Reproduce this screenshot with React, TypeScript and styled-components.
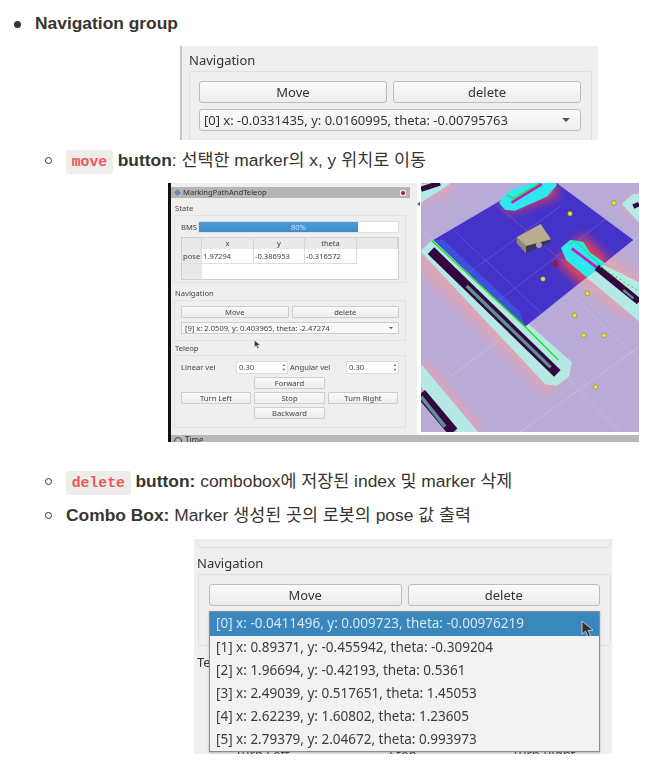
import React from "react"
import styled, { createGlobalStyle } from "styled-components"

const GlobalStyle = createGlobalStyle`
  html, body {
    margin: 0;
    background: #fff;
  }
  body {
    color: #37352f;
    font-family: "Liberation Sans", "Noto Sans CJK KR", sans-serif;
    font-size: 17.4px;
    line-height: 27px;
  }
`

const Page = styled.div`
  height: 769px;
  overflow: hidden;
  padding-top: 10px;
  box-sizing: border-box;
`

const OuterList = styled.ul`
  list-style: none;
  margin: 0;
  padding-left: 35px;
`

const InnerList = styled.ul`
  list-style: none;
  margin: 0;
  padding-left: 31px;
`

const OuterItem = styled.li`
  position: relative;
  &::before {
    background: #37352f;
    border-radius: 50%;
    content: "";
    height: 7px;
    left: -21px;
    position: absolute;
    top: 10.5px;
    width: 7px;
  }
`

const Item = styled.li<{ $gap?: number }>`
  margin-top: ${(p) => p.$gap ?? 0}px;
  position: relative;
  &::before {
    border: 1px solid #37352f;
    border-radius: 50%;
    box-sizing: border-box;
    content: "";
    height: 7px;
    left: -21.5px;
    position: absolute;
    top: 10px;
    width: 7px;
  }
`

const Code = styled.code`
  background: rgba(135, 131, 120, 0.15);
  border-radius: 3px;
  color: #eb5757;
  font-family: "Liberation Mono", monospace;
  font-size: 14.8px;
  font-weight: 700;
  line-height: 1;
  padding: 3.6px 5.7px;
`

const Figure = styled.div<{ $left: number; $top: number; $width: number; $height: number }>`
  box-sizing: border-box;
  height: ${(p) => p.$height}px;
  margin-left: ${(p) => p.$left}px;
  margin-top: ${(p) => p.$top}px;
  overflow: hidden;
  width: ${(p) => p.$width}px;
`

/* Qt widgets, big scale */
const QtPanel = styled.div<{ $edge?: boolean }>`
  background: #efefef;
  border-left: ${(p) => (p.$edge ? "2px solid #c8c8c8" : "0")};
  box-sizing: border-box;
  color: #333;
  filter: blur(0.3px);
  font-family: "Noto Sans", sans-serif;
  font-size: 13px;
  height: 100%;
  line-height: 16px;
  overflow: hidden;
  position: relative;
`

const GroupTitle = styled.div<{ $left: number; $top: number }>`
  margin-left: ${(p) => p.$left}px;
  padding-top: ${(p) => p.$top}px;
`

const GroupBox = styled.div<{ $left: number; $right: number; $top: number; $pad: string }>`
  border: 1px solid #e0e0e0;
  border-radius: 2px;
  margin: ${(p) => p.$top}px ${(p) => p.$right}px 0 ${(p) => p.$left}px;
  padding: ${(p) => p.$pad};
`

const ButtonRow = styled.div`
  display: grid;
  gap: 6px;
  grid-template-columns: 1fr 1fr;
`

const QtButton = styled.div`
  align-items: center;
  background: linear-gradient(#fbfbfb, #ececec);
  border: 1px solid #bdbdbd;
  border-radius: 3px;
  box-sizing: border-box;
  display: flex;
  height: 22px;
  justify-content: center;
`

const Combo = styled.div`
  align-items: center;
  background: linear-gradient(#fbfbfb, #f0f0f0);
  border: 1px solid #bdbdbd;
  border-radius: 3px;
  box-sizing: border-box;
  display: flex;
  height: 22px;
  justify-content: space-between;
  margin-top: 6px;
  padding: 0 10px 0 4px;
  white-space: nowrap;
`

const ComboArrow = styled.span<{ $size?: number }>`
  border-left: ${(p) => p.$size ?? 4}px solid transparent;
  border-right: ${(p) => p.$size ?? 4}px solid transparent;
  border-top: ${(p) => p.$size ?? 4}px solid #555;
  height: 0;
  width: 0;
`

const PopupList = styled.div`
  background: #f2f2f2;
  border: 1px solid #8c8c8c;
  box-shadow: 0 1px 2px rgba(0, 0, 0, 0.25);
  box-sizing: border-box;
  font-size: 13.5px;
  left: 15px;
  position: absolute;
  top: 72px;
  width: 391px;
  z-index: 2;
`

const PopupRow = styled.div<{ $active?: boolean }>`
  background: ${(p) => (p.$active ? "#3a87bd" : "transparent")};
  color: ${(p) => (p.$active ? "#d5e5f1" : "#3c3c3c")};
  height: ${(p) => (p.$active ? 24 : 23)}px;
  line-height: 23px;
  padding-left: 6px;
  white-space: nowrap;
`

const CursorIcon = styled.svg<{ $left: number; $top: number }>`
  left: ${(p) => p.$left}px;
  position: absolute;
  top: ${(p) => p.$top}px;
  z-index: 3;
`

const HiddenButtons = styled.div`
  color: #555;
  display: grid;
  gap: 4px;
  grid-template-columns: 1fr 1fr 1fr;
  margin-top: 76px;
  text-align: center;
`

/* Rviz window, small scale */
const RvizShot = styled.div`
  background: #fff;
  border-left: 3px solid #111;
  box-sizing: border-box;
  display: flex;
  flex-direction: column;
  height: 259px;
  overflow: hidden;
`

const RvizBody = styled.div`
  display: flex;
  height: 252px;
`

const SidePanel = styled.div`
  background: #efefef;
  box-sizing: border-box;
  color: #444;
  filter: blur(0.35px);
  flex: 1;
  font-family: "Noto Sans", sans-serif;
  font-size: 7.6px;
  line-height: 11px;
  padding-top: 4px;
  position: relative;
`

const DockTitle = styled.div`
  align-items: center;
  background: #b5b5b5;
  color: #333;
  display: flex;
  gap: 4px;
  height: 11px;
  justify-content: space-between;
  margin-right: 7px;
  padding: 0 4px;
`

const DockName = styled.span`
  align-items: center;
  display: flex;
  gap: 3px;
`

const DockIcon = styled.span`
  background: #6f86b5;
  display: block;
  height: 5px;
  transform: rotate(45deg);
  width: 5px;
`

const DockClose = styled.span`
  background: #e8e8e8;
  border-radius: 1px;
  display: block;
  height: 6px;
  position: relative;
  width: 6px;
  &::after {
    background: #c8102e;
    border-radius: 50%;
    content: "";
    height: 4px;
    left: 1px;
    position: absolute;
    top: 1px;
    width: 4px;
  }
`

const SmallTitle = styled.div<{ $top: number }>`
  margin-left: 4px;
  margin-top: ${(p) => p.$top}px;
`

const SmallGroup = styled.div<{ $height: number; $top: number }>`
  border: 1px solid #e3e3e3;
  box-sizing: border-box;
  height: ${(p) => p.$height}px;
  margin: ${(p) => p.$top}px 11px 0 3px;
  padding: 5px 6px;
`

const BmsRow = styled.div`
  align-items: center;
  display: flex;
  height: 12px;
  gap: 1px;
`

const BmsTrack = styled.div`
  background: #fff;
  border: 1px solid #ddd;
  box-sizing: border-box;
  flex: 1;
  height: 12px;
  position: relative;
`

const BmsFill = styled.div`
  background: linear-gradient(#4a9bd8, #3a8ccb);
  height: 100%;
`

const BmsLabel = styled.span`
  color: #cfe4f4;
  left: 0;
  position: absolute;
  right: 0;
  text-align: center;
  top: 0;
`

const PoseTable = styled.div`
  background: #fff;
  border: 1px solid #cfcfcf;
  box-sizing: border-box;
  display: grid;
  grid-template-columns: 20px 52px 51px 52px 1fr;
  grid-template-rows: 11px 15px 1fr;
  height: 43px;
  margin-top: 4px;
`

const HeadCell = styled.div`
  background: #e9e9e9;
  border-right: 1px solid #d6d6d6;
  text-align: center;
`

const PoseCell = styled.div<{ $head?: boolean }>`
  align-items: center;
  background: ${(p) => (p.$head ? "#e9e9e9" : "#fff")};
  border-bottom: 1px solid #ddd;
  border-right: 1px solid #ddd;
  display: flex;
  padding-left: 1px;
`

const RowHeadFill = styled.div`
  background: #e9e9e9;
`

const SmallButtons = styled.div`
  display: grid;
  gap: 3px;
  grid-template-columns: 1fr 1fr;
`

const SmallButton = styled.div<{ $col?: number }>`
  align-items: center;
  background: linear-gradient(#fafafa, #ededed);
  border: 1px solid #cdcdcd;
  border-radius: 1px;
  box-sizing: border-box;
  display: flex;
  grid-column: ${(p) => p.$col ?? "auto"};
  height: 12px;
  justify-content: center;
`

const SmallCombo = styled.div`
  align-items: center;
  background: #f8f8f8;
  border: 1px solid #cdcdcd;
  box-sizing: border-box;
  display: flex;
  height: 12px;
  justify-content: space-between;
  margin-top: 4px;
  padding: 0 5px 0 3px;
`

const VelRow = styled.div`
  align-items: center;
  display: grid;
  grid-template-columns: 55px 52px 58px 1fr;
  height: 13px;
`

const SpinBox = styled.div`
  background: #fff;
  border: 1px solid #ddd;
  box-sizing: border-box;
  color: #444;
  display: flex;
  height: 13px;
  justify-content: space-between;
  line-height: 11px;
  padding: 0 1px 0 2px;
`

const SpinArrows = styled.span`
  color: #666;
  font-size: 4px;
  line-height: 5px;
  text-align: center;
`

const DriveGrid = styled.div`
  display: grid;
  gap: 3px;
  grid-template-columns: 70px 71px 70px;
  margin-top: 3px;
`

const TimeBar = styled.div`
  align-items: flex-start;
  background: #b8b8b8;
  color: #333;
  display: flex;
  filter: blur(0.35px);
  font-family: "Noto Sans", sans-serif;
  font-size: 8px;
  gap: 3px;
  height: 7px;
  line-height: 10px;
  overflow: hidden;
  padding-left: 3px;
`

const TimeDot = styled.span`
  border: 1px solid #444;
  border-radius: 50%;
  display: block;
  height: 6px;
  margin-top: 2px;
  width: 6px;
`

const MapColumn = styled.div`
  background: #fff;
  flex: none;
  position: relative;
  width: 222px;
`

const SplitArrow = styled.span`
  border-bottom: 2px solid transparent;
  border-right: 3px solid #555;
  border-top: 2px solid transparent;
  height: 0;
  left: 0;
  position: absolute;
  top: 19px;
  width: 0;
`

const MapSvg = styled.svg`
  display: block;
  filter: blur(0.3px);
  margin-left: 4px;
`

const markers: [number, number][] = [
  [450, 101],
  [582, 69],
  [369, 297],
  [502, 340],
  [464, 406],
  [491, 466],
  [552, 466],
  [527, 621],
]

const MapView = () => (
  <MapSvg width={218} height={249} viewBox="3 9 654 747">
    <defs>
      <filter id="soft" x="-30%" y="-30%" width="160%" height="160%">
        <feGaussianBlur stdDeviation="12" />
      </filter>
      <filter id="hot" x="-50%" y="-50%" width="200%" height="200%">
        <feGaussianBlur stdDeviation="16" />
      </filter>
      <clipPath id="quad">
        <polygon points="40,180 240,62 285,40 410,9 640,180 315,440" />
      </clipPath>
    </defs>
    <rect x="3" y="9" width="654" height="747" fill="#b9abd8" />
    <g filter="url(#soft)" fill="none" stroke="#e8a4ad" opacity="0.72">
      <path d="M10 215L415 615" strokeWidth="100" />
      <path d="M3 565L165 760" strokeWidth="60" />
      <path d="M500 250L657 365" strokeWidth="130" />
      <path d="M3 30L90 9" strokeWidth="70" />
      <path d="M620 60L657 90" strokeWidth="60" />
    </g>
    <g stroke="#cfc6de" strokeWidth="2" fill="none" opacity="0.8">
      <path d="M90 590L657 170M300 756L657 500M3 150L600 756M360 250L657 540" />
    </g>
    <g fill="#b5e9e5" stroke="#b5e9e5" strokeWidth="10" strokeLinejoin="round">
      <polygon points="8,214 38,185 450,548 443,586 410,612 378,608" />
      <polygon points="3,560 3,612 118,756 168,756" />
      <polygon points="3,18 85,9 3,62" />
      <polygon points="505,290 540,255 657,312 657,418" />
      <polygon points="612,72 640,47 657,47 657,120" />
    </g>
    <g clipPath="url(#quad)">
      <rect x="3" y="9" width="654" height="747" fill="#4433c9" />
      <g filter="url(#hot)" fill="none" stroke="#f0404a">
        <path d="M450 205L530 280" strokeWidth="110" />
        <path d="M250 60L400 9" strokeWidth="80" />
      </g>
      <polygon points="40,180 70,180 300,395 315,440" fill="#3f52e0" opacity="0.9" />
      <g stroke="#7f75d8" strokeWidth="2" fill="none" opacity="0.7">
        <path d="M130 290L420 80M225 370L560 115M100 150L365 400M230 75L500 305" />
      </g>
    </g>
    <g fill="#2fe8ee" stroke="#2fe8ee" strokeWidth="10" strokeLinejoin="round">
      <path d="M243 68L272 35L340 14L405 14L378 46L285 87L258 85Z" />
      <path d="M429 205L452 185L487 190L507 222L548 250L500 286L443 238Z" />
    </g>
    <path d="M275 68L365 12" stroke="#c619b8" strokeWidth="8" fill="none" />
    <path d="M260 45L280 55L360 9" stroke="#2be02b" strokeWidth="4" fill="none" />
    <path d="M455 205L530 262" stroke="#c619b8" strokeWidth="8" fill="none" />
    <path d="M448 195L465 182L540 255" stroke="#2be02b" strokeWidth="3" fill="none" />
    <path d="M33 212L412 580" stroke="#33063f" strokeWidth="28" fill="none" />
    <path d="M140 318L392 562" stroke="#5f8f94" strokeWidth="10" fill="none" />
    <path d="M3 640L100 756" stroke="#33063f" strokeWidth="32" fill="none" />
    <path d="M3 650L75 740" stroke="#5f8f94" strokeWidth="11" fill="none" />
    <path d="M530 262L657 365" stroke="#33063f" strokeWidth="20" fill="none" />
    <path d="M610 330L640 355" stroke="#5f8f94" strokeWidth="7" fill="none" />
    <path d="M540 260L650 330" stroke="#2be02b" strokeWidth="3.5" strokeDasharray="5 9" fill="none" />
    <path d="M3 28L60 9" stroke="#33063f" strokeWidth="16" fill="none" />
    <path d="M640 80L657 72" stroke="#33063f" strokeWidth="14" fill="none" />
    <path d="M35 182L315 440L415 540" stroke="#27e027" strokeWidth="4.5" fill="none" />
    <polygon points="290,172 318,198 318,220 290,190" fill="#8f8770" />
    <polygon points="318,198 393,178 393,185 318,220" fill="#3b3560" />
    <polygon points="290,172 362,132 393,178 318,198" fill="#b8ad8f" />
    <circle cx="357" cy="195" r="9" fill="#aaa79c" />
    <circle cx="407" cy="251" r="7" fill="#c8101c" stroke="#7a1020" strokeWidth="1.5" />
    {markers.map(([cx, cy]) => (
      <circle key={cx + cy} cx={cx} cy={cy} r="7" fill="#f2e21e" stroke="#77702a" strokeWidth="1.5" />
    ))}
  </MapSvg>
)

const Cursor = ({ left, top, width }: { left: number; top: number; width: number }) => (
  <CursorIcon $left={left} $top={top} width={width} height={width * 1.3} viewBox="0 0 14 18">
    <path d="M1 1L1 14L4.5 11L7 16.5L9.5 15.5L7 10.5L12 10Z" fill="#333" stroke="#ddd" strokeWidth="0.8" />
  </CursorIcon>
)

const poseRows = [
  "[1] x: 0.89371, y: -0.455942, theta: -0.309204",
  "[2] x: 1.96694, y: -0.42193, theta: 0.5361",
  "[3] x: 2.49039, y: 0.517651, theta: 1.45053",
  "[4] x: 2.62239, y: 1.60802, theta: 1.23605",
  "[5] x: 2.79379, y: 2.04672, theta: 0.993973",
]

const App = () => (
  <Page>
    <GlobalStyle />
    <OuterList>
      <OuterItem>
        <strong>Navigation group</strong>
        <Figure $left={145} $top={9} $width={418} $height={94}>
          <QtPanel $edge>
            <GroupTitle $left={7} $top={6}>Navigation</GroupTitle>
            <GroupBox $left={7} $right={6} $top={3} $pad="9px 10px 9px 9px">
              <ButtonRow>
                <QtButton>Move</QtButton>
                <QtButton>delete</QtButton>
              </ButtonRow>
              <Combo>
                [0] x: -0.0331435, y: 0.0160995, theta: -0.00795763
                <ComboArrow />
              </Combo>
            </GroupBox>
          </QtPanel>
        </Figure>
        <InnerList>
          <Item $gap={7}>
            <Code>move</Code> <strong>button</strong>: 선택한 marker의 x, y 위치로 이동
            <Figure $left={102} $top={9} $width={471} $height={259}>
              <RvizShot>
                <RvizBody>
                  <SidePanel>
                    <DockTitle>
                      <DockName>
                        <DockIcon />
                        MarkingPathAndTeleop
                      </DockName>
                      <DockClose />
                    </DockTitle>
                    <SmallTitle $top={5}>State</SmallTitle>
                    <SmallGroup $height={68} $top={1}>
                      <BmsRow>
                        BMS
                        <BmsTrack>
                          <BmsFill style={{ width: "80%" }} />
                          <BmsLabel>80%</BmsLabel>
                        </BmsTrack>
                      </BmsRow>
                      <PoseTable>
                        <HeadCell />
                        <HeadCell>x</HeadCell>
                        <HeadCell>y</HeadCell>
                        <HeadCell>theta</HeadCell>
                        <HeadCell />
                        <PoseCell $head>pose</PoseCell>
                        <PoseCell>1.97294</PoseCell>
                        <PoseCell>-0.386953</PoseCell>
                        <PoseCell>-0.316572</PoseCell>
                        <span />
                        <RowHeadFill />
                      </PoseTable>
                    </SmallGroup>
                    <SmallTitle $top={5}>Navigation</SmallTitle>
                    <SmallGroup $height={41} $top={1}>
                      <SmallButtons>
                        <SmallButton>Move</SmallButton>
                        <SmallButton>delete</SmallButton>
                      </SmallButtons>
                      <SmallCombo>
                        [9] x: 2.0509, y: 0.403965, theta: -2.47274
                        <ComboArrow $size={2} />
                      </SmallCombo>
                    </SmallGroup>
                    <SmallTitle $top={2}>Teleop</SmallTitle>
                    <SmallGroup $height={73} $top={1}>
                      <VelRow>
                        Linear vel
                        <SpinBox>
                          0.30
                          <SpinArrows>▲<br />▼</SpinArrows>
                        </SpinBox>
                        <span>&nbsp;Angular vel</span>
                        <SpinBox>
                          0.30
                          <SpinArrows>▲<br />▼</SpinArrows>
                        </SpinBox>
                      </VelRow>
                      <DriveGrid>
                        <SmallButton $col={2}>Forward</SmallButton>
                        <SmallButton $col={1}>Turn Left</SmallButton>
                        <SmallButton>Stop</SmallButton>
                        <SmallButton>Turn Right</SmallButton>
                        <SmallButton $col={2}>Backward</SmallButton>
                      </DriveGrid>
                    </SmallGroup>
                    <Cursor left={83} top={157} width={7} />
                  </SidePanel>
                  <MapColumn>
                    <SplitArrow />
                    <MapView />
                  </MapColumn>
                </RvizBody>
                <TimeBar>
                  <TimeDot />
                  Time
                </TimeBar>
              </RvizShot>
            </Figure>
          </Item>
          <Item $gap={26}>
            <Code>delete</Code> <strong>button:</strong> combobox에 저장된 index 및 marker 삭제
          </Item>
          <Item $gap={7}>
            <strong>Combo Box:</strong> Marker 생성된 곳의 로봇의 pose 값 출력
            <Figure $left={128} $top={10} $width={418} $height={215}>
              <QtPanel>
                <GroupBox $left={3} $right={1} $top={-1} $pad="4px" />
                <GroupTitle $left={3} $top={7}>Navigation</GroupTitle>
                <GroupBox $left={4} $right={1} $top={3} $pad="9px 10px 39px 10px">
                  <ButtonRow>
                    <QtButton>Move</QtButton>
                    <QtButton>delete</QtButton>
                  </ButtonRow>
                </GroupBox>
                <GroupTitle $left={3} $top={8}>Te</GroupTitle>
                <HiddenButtons>
                  <span>Turn Left</span>
                  <span>Stop</span>
                  <span>Turn Right</span>
                </HiddenButtons>
                <PopupList>
                  <PopupRow $active>[0] x: -0.0411496, y: 0.009723, theta: -0.00976219</PopupRow>
                  {poseRows.map((row) => (
                    <PopupRow key={row}>{row}</PopupRow>
                  ))}
                </PopupList>
                <Cursor left={387} top={81} width={14} />
              </QtPanel>
            </Figure>
          </Item>
        </InnerList>
      </OuterItem>
    </OuterList>
  </Page>
)

export default App
